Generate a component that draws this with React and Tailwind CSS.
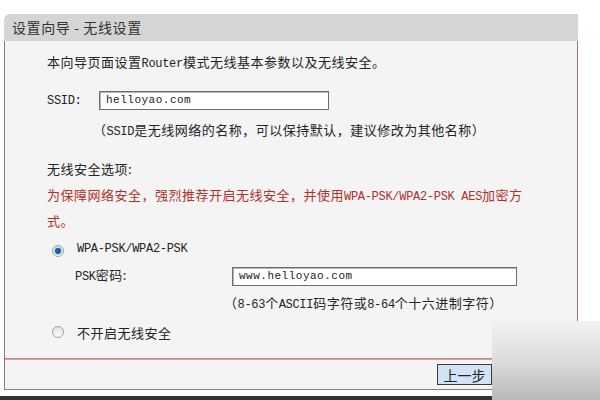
const CN = { fontFamily: '"Noto Sans CJK SC", "Noto Sans", sans-serif' }
const MONO = { fontFamily: '"Liberation Mono", "DejaVu Sans Mono", monospace' }

// latin bits in the old router page are rendered by the Song font's half-width glyphs
function L({ children }) {
  return <span style={MONO} className="text-[12px] tracking-[-0.3px]">{children}</span>
}

function Radio({ checked }) {
  return (
    <span className="relative inline-flex items-center justify-center w-[12px] h-[12px] rounded-full border border-[#9aa4ad] bg-gradient-to-b from-[#e4e4e4] to-[#fafafa]">
      {checked && <span className="w-[6px] h-[6px] rounded-full bg-[#1f5fa8] shadow-[0_0_2px_#4c8bd0]" />}
    </span>
  )
}

function TextBox({ value, className }) {
  return (
    <div className={`h-[19px] bg-white border border-[#6d6d6d] shadow-[inset_1px_1px_0_#b8b8b8] flex items-center pl-[6px] ${className}`}>
      <span style={MONO} className="text-[11px] text-[#222]">{value}</span>
    </div>
  )
}

export default function App() {
  return (
    <div style={CN} className="relative w-[600px] h-[400px] bg-white overflow-hidden text-[#242424]">
      <div className="pt-[14px] pl-[4px] w-[578px]">
        <div className="h-[27px] bg-[#d5d5d5] rounded-tl-[6px] flex items-center pl-[8px] text-[14px] tracking-[0.6px] text-[#333]">
          设置向导 - 无线设置
        </div>
        <div className="bg-[#f4f4f4] border-x border-b border-[#9a7676] h-[349px] flex flex-col">
          <div className="flex-1 pl-[42px] pt-[11px] text-[13px] tracking-[0.5px]">
            <div className="h-[20px] leading-[20px]">本向导页面设置<L>Router</L>模式无线基本参数以及无线安全。</div>

            <div className="mt-[17px] flex items-center">
              <div className="w-[52px] leading-[19px]"><L>SSID:</L></div>
              <TextBox value="helloyao.com" className="w-[230px]" />
            </div>
            <div className="mt-[9px] ml-[46px] h-[20px] leading-[20px]">（<L>SSID</L>是无线网络的名称，可以保持默认，建议修改为其他名称）</div>

            <div className="mt-[19px] h-[20px] leading-[20px]">无线安全选项:</div>
            <div className="mt-[4px] leading-[23px] text-[#b3302a]">
              <div>为保障网络安全，强烈推荐开启无线安全，并使用<L>WPA-PSK/WPA2-PSK AES</L>加密方</div>
              <div>式。</div>
            </div>

            <div className="mt-[7px] h-[20px] flex items-center">
              <div className="ml-[5px] w-[25px]"><Radio checked /></div>
              <L>WPA-PSK/WPA2-PSK</L>
            </div>
            <div className="mt-[6px] flex items-center">
              <div className="ml-[28px] w-[157px] leading-[19px]"><L>PSK</L>密码:</div>
              <TextBox value="www.helloyao.com" className="w-[285px]" />
            </div>
            <div className="mt-[6px] ml-[177px] h-[20px] leading-[20px]">（<L>8-63</L>个<L>ASCII</L>码字符或<L>8-64</L>个十六进制字符）</div>

            <div className="mt-[10px] h-[20px] flex items-center">
              <div className="ml-[5px] w-[25px]"><Radio /></div>
              <span>不开启无线安全</span>
            </div>
          </div>
          <div className="h-[30px] border-t border-[#d9a3a3] shadow-[0_-1px_0_#b98a8a] flex items-center justify-end pr-[85px]">
            <button className="h-[21px] w-[55px] border border-[#3c3c3c] bg-[#d3e3f7] text-[14px] text-[#222] leading-none">
              上一步
            </button>
          </div>
        </div>
      </div>
      <div className="absolute left-0 right-0 bottom-0 h-[4px] bg-[#333333]" />
      <div className="absolute left-[492px] top-[321px] w-[108px] h-[79px] bg-gradient-to-b from-[#f2f2f2] via-[#dcdcdc] to-[#b9b9b9]" />
    </div>
  )
}
